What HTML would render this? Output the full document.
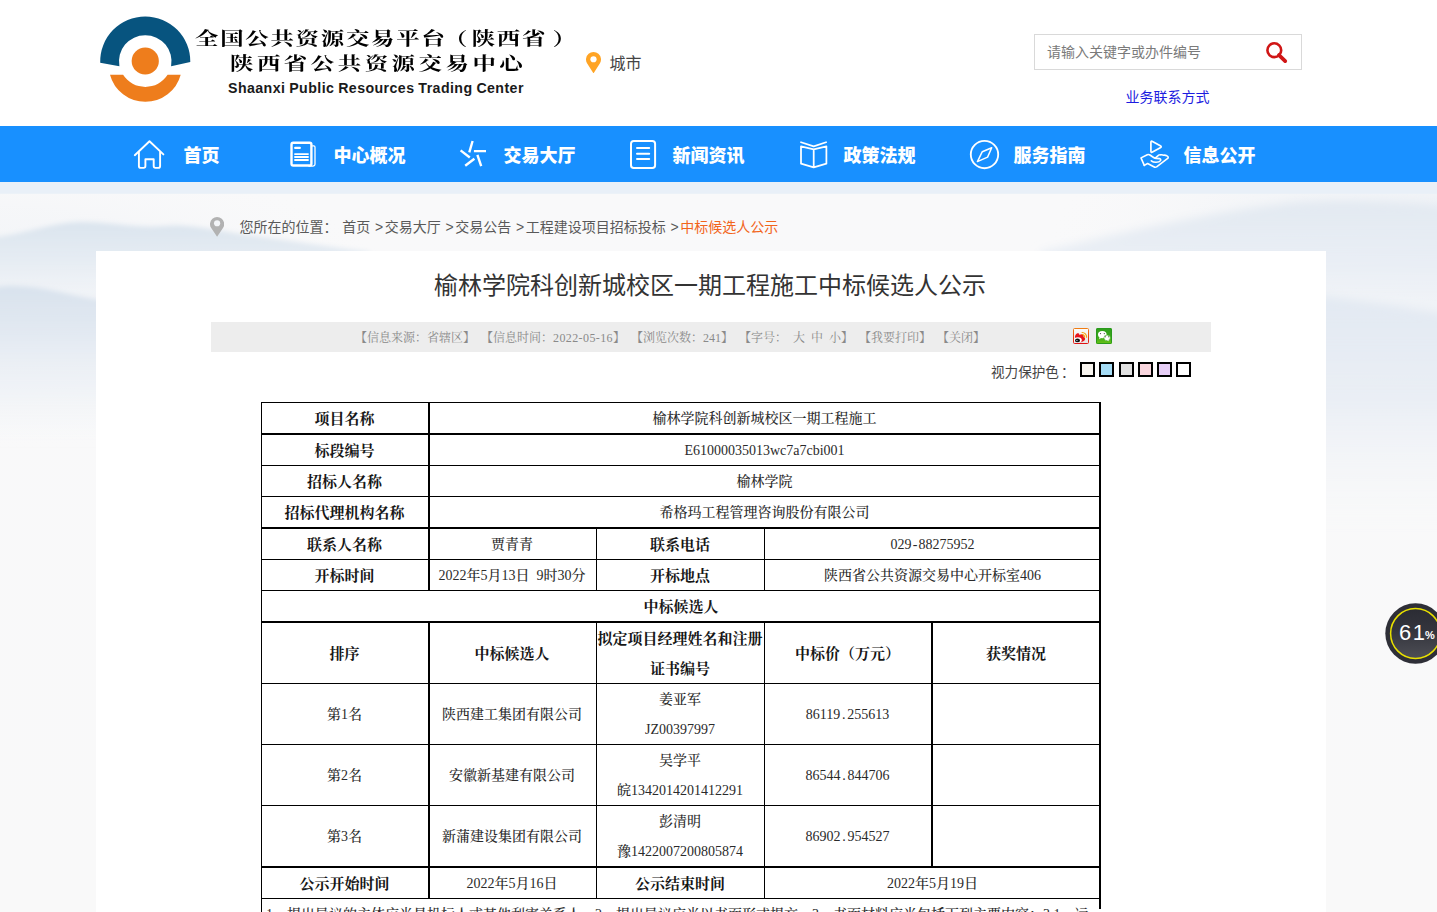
<!DOCTYPE html>
<html lang="zh-CN">
<head>
<meta charset="utf-8">
<title>榆林学院科创新城校区一期工程施工中标候选人公示</title>
<style>
*{box-sizing:border-box;margin:0;padding:0}
html,body{width:1437px;height:912px;overflow:hidden;background:#fff}
body{font-family:"Liberation Sans","Noto Sans CJK SC",sans-serif;color:#333;position:relative}
a{text-decoration:none;color:inherit}

/* ---------- header ---------- */
#hdr{position:absolute;left:0;top:0;width:1437px;height:126px;background:#fff}
#logo{position:absolute;left:90px;top:8px;width:120px;height:104px}
#t1,#t2{position:absolute;font-family:"Liberation Serif","Noto Serif CJK SC",serif;font-weight:700;color:#000;white-space:nowrap;transform-origin:0 0;transform:scaleX(1.3);font-size:18px;line-height:26px}
#t1{left:194.500px;top:26px;letter-spacing:1.350px}
#t1 i{font-style:normal;position:relative}
#t2{left:229.500px;top:51px;letter-spacing:2.720px}
#t3{position:absolute;left:228px;top:78px;font-size:14.200px;line-height:20px;font-weight:700;color:#1a1a1a;letter-spacing:.420px;word-spacing:-.5px;white-space:nowrap;font-family:"Liberation Sans",sans-serif}
#city{position:absolute;left:609.500px;top:54px;font-size:16px;line-height:20px;color:#444}
#pin{position:absolute;left:586.070px;top:51.800px;width:15px;height:21.400px}
#search{position:absolute;left:1034px;top:34px;width:268px;height:36px;border:1px solid #d9d9d9;background:#fff}
#search span{position:absolute;left:12px;top:8px;font-size:14px;line-height:18px;color:#7a7a7a}
#search svg{position:absolute;left:230px;top:6px;width:24px;height:24px}
#biz{position:absolute;left:1125.500px;top:88px;font-size:14px;line-height:18px;color:#1c1ce0;white-space:nowrap}

/* ---------- nav ---------- */
#nav{position:absolute;left:0;top:126px;width:1437px;height:56px;background:#1890ff}
#navico{position:absolute;left:0;top:0;width:1437px;height:56px}
#nav b{position:absolute;top:18px;font-size:18px;line-height:24px;color:#fff;font-weight:900;white-space:nowrap;letter-spacing:0;margin-left:-.6px;font-family:"Liberation Sans","Noto Sans CJK SC",sans-serif}

/* ---------- background ---------- */
#bg{position:absolute;left:0;top:182px;width:1437px;height:730px;background:#f9f9f9;overflow:hidden}
#bgsvg{position:absolute;left:0;top:0;width:1437px;height:730px}

/* ---------- crumb ---------- */
#crumb{position:absolute;left:239.500px;top:217px;font-size:14px;line-height:20px;color:#595959;white-space:nowrap;word-spacing:.830px}
#crumb i{font-style:normal;margin-right:1.600px}
#crumb em{font-style:normal;color:#f2651c}
#cpin{position:absolute;left:210px;top:216.960px;width:14.200px;height:19.800px}

/* ---------- card ---------- */
#card{position:absolute;left:96px;top:251px;width:1230px;height:661px;background:#fff}
#title{position:absolute;left:-1px;top:18px;width:1230px;text-align:center;font-size:24px;line-height:34px;color:#333;font-weight:400;white-space:nowrap}
#meta{position:absolute;left:115px;top:71px;width:1000px;height:30px;background:#ededed}
#meta span{position:absolute;left:144px;top:8px;font-size:12px;line-height:16px;color:#8a8a8a;white-space:pre;word-spacing:3px;text-spacing-trim:space-all;font-family:"Liberation Serif","Noto Serif CJK SC",serif}
#meta span i{font-style:normal;letter-spacing:.4px}
#eye i{font-style:normal;margin-left:2px}
#eye{position:absolute;left:895px;top:114px;font-size:13.600px;line-height:16px;color:#444;white-space:nowrap}
.sw{position:absolute;top:111px;width:15px;height:15px;border:2px solid #000}

/* ---------- share icons ---------- */
#wb,#wx{position:absolute;top:77px;width:16px;height:16px}
#wb{left:977px}#wx{left:1000px}

/* ---------- table ---------- */
#tb{position:absolute;left:165px;top:152.500px;width:840px;border-collapse:collapse;table-layout:fixed;font-family:"Liberation Serif","Noto Serif CJK SC",serif;text-spacing-trim:space-all}
#tb td,#tb th{padding:0;text-align:center;vertical-align:middle;font-size:14px;line-height:30px;color:#2a2a2a;font-weight:500;white-space:nowrap;overflow:hidden}
#tb th{font-size:15px;font-weight:700;color:#161616}
#tb td.l{text-align:left;padding-left:5px;vertical-align:top}
#tb td{word-spacing:3.500px}
#tb i.d{font-style:normal;margin:0 1.750px}
#tb i.h{font-style:normal;margin:0 1.170px}
.hl,.vl{position:absolute;background:#000}

/* ---------- floating percent ---------- */
#pct{position:absolute;left:1384.600px;top:603.400px;width:61px;height:61px}
#pct svg{position:absolute;left:0;top:0;width:61px;height:61px}
#pn{position:absolute;left:14.500px;top:16.500px;font-size:22px;line-height:26px;color:#fff;font-family:"Liberation Sans",sans-serif;letter-spacing:1.500px}
#pp{position:absolute;left:40.500px;top:25px;font-size:11px;line-height:14px;color:#fff;font-weight:700;font-family:"Liberation Sans",sans-serif}
</style>
</head>
<body>

<div id="hdr">
  <svg id="logo" viewBox="90 8 120 104">
    <path d="M100.200 62.800A45.100 45.100 0 0 1 145.250 16.400A45.100 45.100 0 0 1 190.300 62L171.100 66.200A26.200 26.200 0 0 0 145.250 35.200A26.200 26.200 0 0 0 119.400 66.200Z" fill="#07547f"/>
    <circle cx="145.250" cy="61" r="13.600" fill="#ee7d1c"/>
    <path d="M110 74.700L123.100 74.700A26.400 26.400 0 0 0 167.600 74.700L180.700 74.700A36.600 36.600 0 0 1 110 74.700Z" fill="#ee7d1c"/>
  </svg>
  <div id="t1">全国公共资源交易平台<i style="left:-2px">（</i>陕西省<i style="left:4px">）</i></div>
  <div id="t2">陕西省公共资源交易中心</div>
  <div id="t3">Shaanxi Public Resources Trading Center</div>
  <svg id="pin" viewBox="0 0 15 21.400"><path d="M1.185 11.546A7.500 7.500 0 1 1 13.815 11.546L7.500 21.400Z" fill="#ffa425"/><circle cx="7.500" cy="7.250" r="3.100" fill="#fff"/></svg>
  <div id="city">城市</div>
  <div id="search"><span>请输入关键字或办件编号</span>
    <svg viewBox="0 0 24 24"><circle cx="9.300" cy="9.200" r="6.900" fill="none" stroke="#d01616" stroke-width="2.600"/><path d="M14 14.100L20.200 20.100" stroke="#d01616" stroke-width="3.800" stroke-linecap="round"/></svg>
  </div>
  <a id="biz">业务联系方式</a>
</div>

<div id="nav">
  <svg id="navico" viewBox="0 126 1437 56" fill="none" stroke="#fff" stroke-width="1.800" stroke-linecap="round" stroke-linejoin="round">
    <!-- home -->
    <path d="M134.800 155.200L149.500 141.200L163.400 154.400" stroke-width="1.900"/>
    <path d="M138.900 152.200V166Q138.900 167.900 140.800 167.900H143.600Q145.400 167.900 145.400 166.100V159.300H153.700V166.100Q153.700 167.900 155.500 167.900H158.200Q160.100 167.900 160.100 166V152.200" stroke-width="1.900"/>
    <!-- overview doc -->
    <rect x="291.500" y="142.700" width="19.900" height="22.800" rx="1.800" stroke-width="2.400"/>
    <path d="M312.600 145.900H313.800Q315 146 315 147.200V164.300Q315 166 313 166.200H309" stroke-width="1.300"/>
    <path d="M295.200 147.900H299.800" stroke-width="2.300"/>
    <path d="M295 154.100H308M295 157.050H308M295 160H308" stroke-width="1.900"/>
    <!-- trade star -->
    <path d="M472.600 141L469.300 152.400M460.600 150.400L469.800 157.500M473.900 151.100H486M477.400 154.800L481.200 166.200M474.400 158.800L465.200 165.800" stroke-width="2.400" stroke-linecap="butt"/>
    <!-- news -->
    <rect x="631" y="140.900" width="24.100" height="27.200" rx="2.800" stroke-width="2"/>
    <path d="M637 148.100H649.200M637 153.650H649.200M637 159.100H649.200" stroke-width="2"/>
    <!-- book -->
    <path d="M800.300 142L813.700 146.300L826.800 142" stroke-width="1.750" stroke-linecap="butt"/>
    <path d="M801 146.300L813.700 149.400L826.400 146.300V163.700L813.700 167.400L801 163.700ZM813.700 149.400V167.400" stroke-width="1.750"/>
    <!-- compass -->
    <circle cx="984.500" cy="154.500" r="13.700" stroke-width="1.850"/>
    <path d="M991.700 147.700L982.300 151.700L977.400 161.600L987.600 157.100Z" stroke-width="1.500"/>
    <!-- hand play -->
    <path d="M1150.900 142.400Q1150.900 140.500 1152.500 141.400L1160.300 145.700Q1162.100 146.700 1160.300 147.700L1152.500 152Q1150.900 152.900 1150.900 151Z" stroke-width="1.700"/>
    <path d="M1144.300 165.400L1141 157.900L1147.300 154.700Q1148.600 154.100 1149.900 155L1153.600 157.500Q1154.800 158.300 1156.300 158.400L1159.400 158.600Q1161.300 159.200 1160.500 160.700Q1159.500 162.300 1156 162.300Q1153 162.200 1151.300 160.800" stroke-width="1.600"/>
    <path d="M1155.500 157.800L1158.700 155.200Q1159.600 154.600 1160.800 154.900Q1162.500 154.600 1163.500 155.200Q1165.500 155 1166.700 155.700Q1168.800 156.600 1168 158.200L1156.600 166.900Q1155.300 167.600 1153.800 166.800L1147.600 163.500L1144.300 165.400" stroke-width="1.600"/>
  </svg>
  <b style="left:184px">首页</b>
  <b style="left:334px">中心概况</b>
  <b style="left:504px">交易大厅</b>
  <b style="left:673px">新闻资讯</b>
  <b style="left:844px">政策法规</b>
  <b style="left:1014px">服务指南</b>
  <b style="left:1184px">信息公开</b>
</div>

<div id="bg">
  <svg id="bgsvg" viewBox="0 182 1437 730" preserveAspectRatio="none">
    <defs>
      <linearGradient id="gv" x1="0" y1="0" x2="0" y2="1"><stop offset="0" stop-color="#f9f9fa"/><stop offset="1" stop-color="#f9f9f9"/></linearGradient>
      <linearGradient id="gm1" x1="0" y1="0" x2="0" y2="1"><stop offset="0" stop-color="#dae4ee"/><stop offset=".5" stop-color="#e4ebf2" stop-opacity=".8"/><stop offset="1" stop-color="#eef2f6" stop-opacity="0"/></linearGradient>
      <linearGradient id="gm2" x1="0" y1="0" x2="0" y2="1"><stop offset="0" stop-color="#d8e2ed"/><stop offset=".3" stop-color="#e1e8f1" stop-opacity=".9"/><stop offset=".7" stop-color="#edf1f6" stop-opacity=".5"/><stop offset="1" stop-color="#f5f6f8" stop-opacity="0"/></linearGradient>
      <linearGradient id="gm3" x1="0" y1="0" x2="0" y2="1"><stop offset="0" stop-color="#e2e9f1"/><stop offset=".5" stop-color="#e9eef5" stop-opacity=".85"/><stop offset="1" stop-color="#f6f7f9" stop-opacity="0"/></linearGradient>
      <linearGradient id="gm4" x1="0" y1="0" x2="0" y2="1"><stop offset="0" stop-color="#e2e9f2"/><stop offset=".45" stop-color="#e8edf4" stop-opacity=".85"/><stop offset="1" stop-color="#f6f7f9" stop-opacity="0"/></linearGradient>
      <radialGradient id="hz"><stop offset="0" stop-color="#e4ebf3" stop-opacity=".9"/><stop offset=".6" stop-color="#ecf0f5" stop-opacity=".5"/><stop offset="1" stop-color="#f5f6f8" stop-opacity="0"/></radialGradient>
      <filter id="bl" x="-5%" y="-10%" width="110%" height="120%"><feGaussianBlur stdDeviation="2.500"/></filter>
      <filter id="bl2" x="-5%" y="-10%" width="110%" height="120%"><feGaussianBlur stdDeviation="5"/></filter>
    </defs>
    <rect x="0" y="182" width="1437" height="730" fill="url(#gv)"/>
    <ellipse cx="-20" cy="300" rx="420" ry="150" fill="url(#hz)" opacity=".55"/>
    <ellipse cx="1480" cy="250" rx="430" ry="170" fill="url(#hz)" opacity=".8"/>
    <path d="M-10 238C25 234 50 223 80 222C110 222 140 229 165 226C185 224 205 228 240 234C290 241 330 247 370 252L370 305L-10 305Z" fill="url(#gm1)" filter="url(#bl)"/>
    <path d="M-10 288C10 284 35 286 60 292C90 299 115 303 150 306L150 445L-10 445Z" fill="url(#gm2)" filter="url(#bl)"/>
    <path d="M1040 252C1110 236 1200 214 1290 203C1340 199 1400 202 1447 206L1447 335L1040 335Z" fill="url(#gm3)" filter="url(#bl2)"/>
    <path d="M1290 292C1340 297 1400 306 1447 314L1447 540L1290 540Z" fill="url(#gm4)" filter="url(#bl2)"/>
    <rect x="0" y="182" width="1437" height="11.800" fill="#e9f0f8"/>
  </svg>
</div>

<svg id="cpin" viewBox="0 0 14.200 19.800"><path d="M1.214 11.070A7.100 7.100 0 1 1 12.986 11.070L7.100 19.800Z" fill="#b2b2b2"/><circle cx="7.100" cy="6.250" r="3.100" fill="#f3f5f8"/></svg>
<div id="crumb">您所在的位置： 首页 <i>&gt;</i>交易大厅 <i>&gt;</i>交易公告 <i>&gt;</i>工程建设项目招标投标 <i>&gt;</i><em>中标候选人公示</em></div>

<div id="card">
  <h1 id="title">榆林学院科创新城校区一期工程施工中标候选人公示</h1>
  <div id="meta"><span>【信息来源：省辖区】 【信息时间：<i>2022-05-16</i>】 【浏览次数：241】 【字号： 大 中 小】 【我要打印】 【关闭】</span></div>
  <svg id="wb" viewBox="0 0 16 16"><defs><linearGradient id="gwb" x1="0" y1="0" x2="0" y2="1"><stop offset="0" stop-color="#f07c12"/><stop offset="1" stop-color="#df1313"/></linearGradient><linearGradient id="gwbb" x1="0" y1="0" x2="0" y2="1"><stop offset="0" stop-color="#fdfdfd"/><stop offset="1" stop-color="#e4e4e4"/></linearGradient></defs><rect x=".5" y=".5" width="15" height="15" rx="1" fill="url(#gwbb)" stroke="url(#gwb)"/><path d="M2.100 9.400C1.700 7.400 3.600 5.100 5.300 5.300c.8.100 1.100.8 1 1.700C7.700 6.200 10 6 10.600 7.300c.3.700.1 1.300-.200 1.800 1.400.3 2 1.300 1.600 2.500-.6 1.800-3.300 3-6 2.900-2.300-.1-3.700-1.600-3.900-5.100z" fill="#e8141c"/><ellipse cx="4.900" cy="12.100" rx="3.900" ry="2.900" fill="#fff"/><ellipse cx="4.500" cy="12.400" rx="2.500" ry="1.900" fill="#111"/><ellipse cx="3.900" cy="12.600" rx=".9" ry=".5" fill="#9fb4c8"/><path d="M9.200 6.500a2.300 2.300 0 0 1 2.300 2.600M9.100 4.500a4.400 4.400 0 0 1 4.500 4.700" fill="none" stroke="#f7a00f" stroke-width="1.200" stroke-linecap="round"/></svg>
  <svg id="wx" viewBox="0 0 16 16"><defs><linearGradient id="gwx" x1="0" y1="0" x2="0" y2="1"><stop offset="0" stop-color="#2f9f1d"/><stop offset=".55" stop-color="#3aa71a"/><stop offset="1" stop-color="#6cc517"/></linearGradient></defs><rect width="16" height="16" rx="1.500" fill="url(#gwx)"/><rect x=".5" y=".5" width="15" height="15" rx="1.200" fill="none" stroke="#2a9a1c"/><ellipse cx="6.300" cy="6.600" rx="4.300" ry="3.600" fill="#fff"/><path d="M3.600 9.200L3 11.200 5.600 9.800z" fill="#fff"/><ellipse cx="11.100" cy="9.900" rx="3.200" ry="2.800" fill="#fff" stroke="#3aa71a" stroke-width=".6"/><path d="M12.300 12.100L12.700 13.300 11 12.500z" fill="#fff"/><circle cx="4.500" cy="5.600" r=".6" fill="#444"/><circle cx="8.300" cy="5.600" r=".6" fill="#444"/><circle cx="9.500" cy="8.700" r=".55" fill="#444"/><circle cx="12.500" cy="8.700" r=".55" fill="#444"/></svg>
  <div id="eye">视力保护色<i>：</i></div>
  <div id="sws"><i class="sw" style="left:984px;background:#f8f5ef"></i><i class="sw" style="left:1003.25px;background:#a5dcf5"></i><i class="sw" style="left:1022.5px;background:#e0e0e0"></i><i class="sw" style="left:1041.75px;background:#f9d6de"></i><i class="sw" style="left:1061px;background:#e6cef6"></i><i class="sw" style="left:1080.25px;background:#ffffff"></i></div>
  <table id="tb">
    <colgroup><col style="width:167px"><col style="width:168px"><col style="width:168px"><col style="width:167px"><col style="width:170px"></colgroup>
    <tr style="height:31px"><th>项目名称</th><td colspan="4">榆林学院科创新城校区一期工程施工</td></tr>
    <tr style="height:32px"><th>标段编号</th><td colspan="4">E61000035013wc7a7cbi001</td></tr>
    <tr style="height:31px"><th>招标人名称</th><td colspan="4">榆林学院</td></tr>
    <tr style="height:31px"><th>招标代理机构名称</th><td colspan="4">希格玛工程管理咨询股份有限公司</td></tr>
    <tr style="height:32px"><th>联系人名称</th><td>贾青青</td><th>联系电话</th><td colspan="2">029<i class="h">-</i>88275952</td></tr>
    <tr style="height:31px"><th>开标时间</th><td>2022年5月13日 9时30分</td><th>开标地点</th><td colspan="2">陕西省公共资源交易中心开标室406</td></tr>
    <tr style="height:31px"><th colspan="5">中标候选人</th></tr>
    <tr style="height:62px"><th>排序</th><th>中标候选人</th><th>拟定项目经理姓名和注册<br>证书编号</th><th>中标价（万元）</th><th>获奖情况</th></tr>
    <tr style="height:61px"><td>第1名</td><td>陕西建工集团有限公司</td><td>姜亚军<br>JZ00397997</td><td>86119<i class="d">.</i>255613</td><td></td></tr>
    <tr style="height:61px"><td>第2名</td><td>安徽新基建有限公司</td><td>吴学平<br>皖1342014201412291</td><td>86544<i class="d">.</i>844706</td><td></td></tr>
    <tr style="height:61px"><td>第3名</td><td>新蒲建设集团有限公司</td><td>彭清明<br>豫1422007200805874</td><td>86902<i class="d">.</i>954527</td><td></td></tr>
    <tr style="height:32px"><th>公示开始时间</th><td>2022年5月16日</td><th>公示结束时间</th><td colspan="2">2022年5月19日</td></tr>
    <tr style="height:62px"><td class="l" colspan="5">1、提出异议的主体应当是投标人或其他利害关系人。2、提出异议应当以书面形式提交。3、书面材料应当包括下列主要内容：3.1、运</td></tr>
  </table>
  <div id="grid"><i class="hl" style="left:165px;top:151px;width:840px;height:1px"></i><i class="hl" style="left:165px;top:182px;width:840px;height:2px"></i><i class="hl" style="left:165px;top:214px;width:840px;height:1px"></i><i class="hl" style="left:165px;top:245px;width:840px;height:1px"></i><i class="hl" style="left:165px;top:276px;width:840px;height:2px"></i><i class="hl" style="left:165px;top:308px;width:840px;height:1px"></i><i class="hl" style="left:165px;top:339px;width:840px;height:1px"></i><i class="hl" style="left:165px;top:370px;width:840px;height:2px"></i><i class="hl" style="left:165px;top:432px;width:840px;height:1px"></i><i class="hl" style="left:165px;top:493px;width:840px;height:1px"></i><i class="hl" style="left:165px;top:554px;width:840px;height:1px"></i><i class="hl" style="left:165px;top:615px;width:840px;height:2px"></i><i class="hl" style="left:165px;top:647px;width:840px;height:1px"></i><i class="vl" style="left:165px;top:151px;width:1px;height:510px"></i><i class="vl" style="left:1003px;top:151px;width:2px;height:507px"></i><i class="vl" style="left:332px;top:151px;width:2px;height:188px"></i><i class="vl" style="left:332px;top:370px;width:2px;height:277px"></i><i class="vl" style="left:500px;top:276px;width:1px;height:63px"></i><i class="vl" style="left:500px;top:370px;width:1px;height:277px"></i><i class="vl" style="left:668px;top:276px;width:1px;height:63px"></i><i class="vl" style="left:668px;top:370px;width:1px;height:277px"></i><i class="vl" style="left:835px;top:370px;width:2px;height:245px"></i></div>
</div>

<div id="pct"><svg viewBox="0 0 61 61"><defs><linearGradient id="gp" x1="0" y1="0" x2="0" y2="1"><stop offset="0" stop-color="#2b2c34"/><stop offset=".45" stop-color="#34353d"/><stop offset="1" stop-color="#4d4e55"/></linearGradient></defs><circle cx="30.500" cy="30.500" r="30.200" fill="#2e2f37"/><circle cx="30.500" cy="30.500" r="24.900" fill="url(#gp)" stroke="#e9e100" stroke-width="1.500"/></svg><span id="pn">61</span><span id="pp">%</span></div>
</body>
</html>
